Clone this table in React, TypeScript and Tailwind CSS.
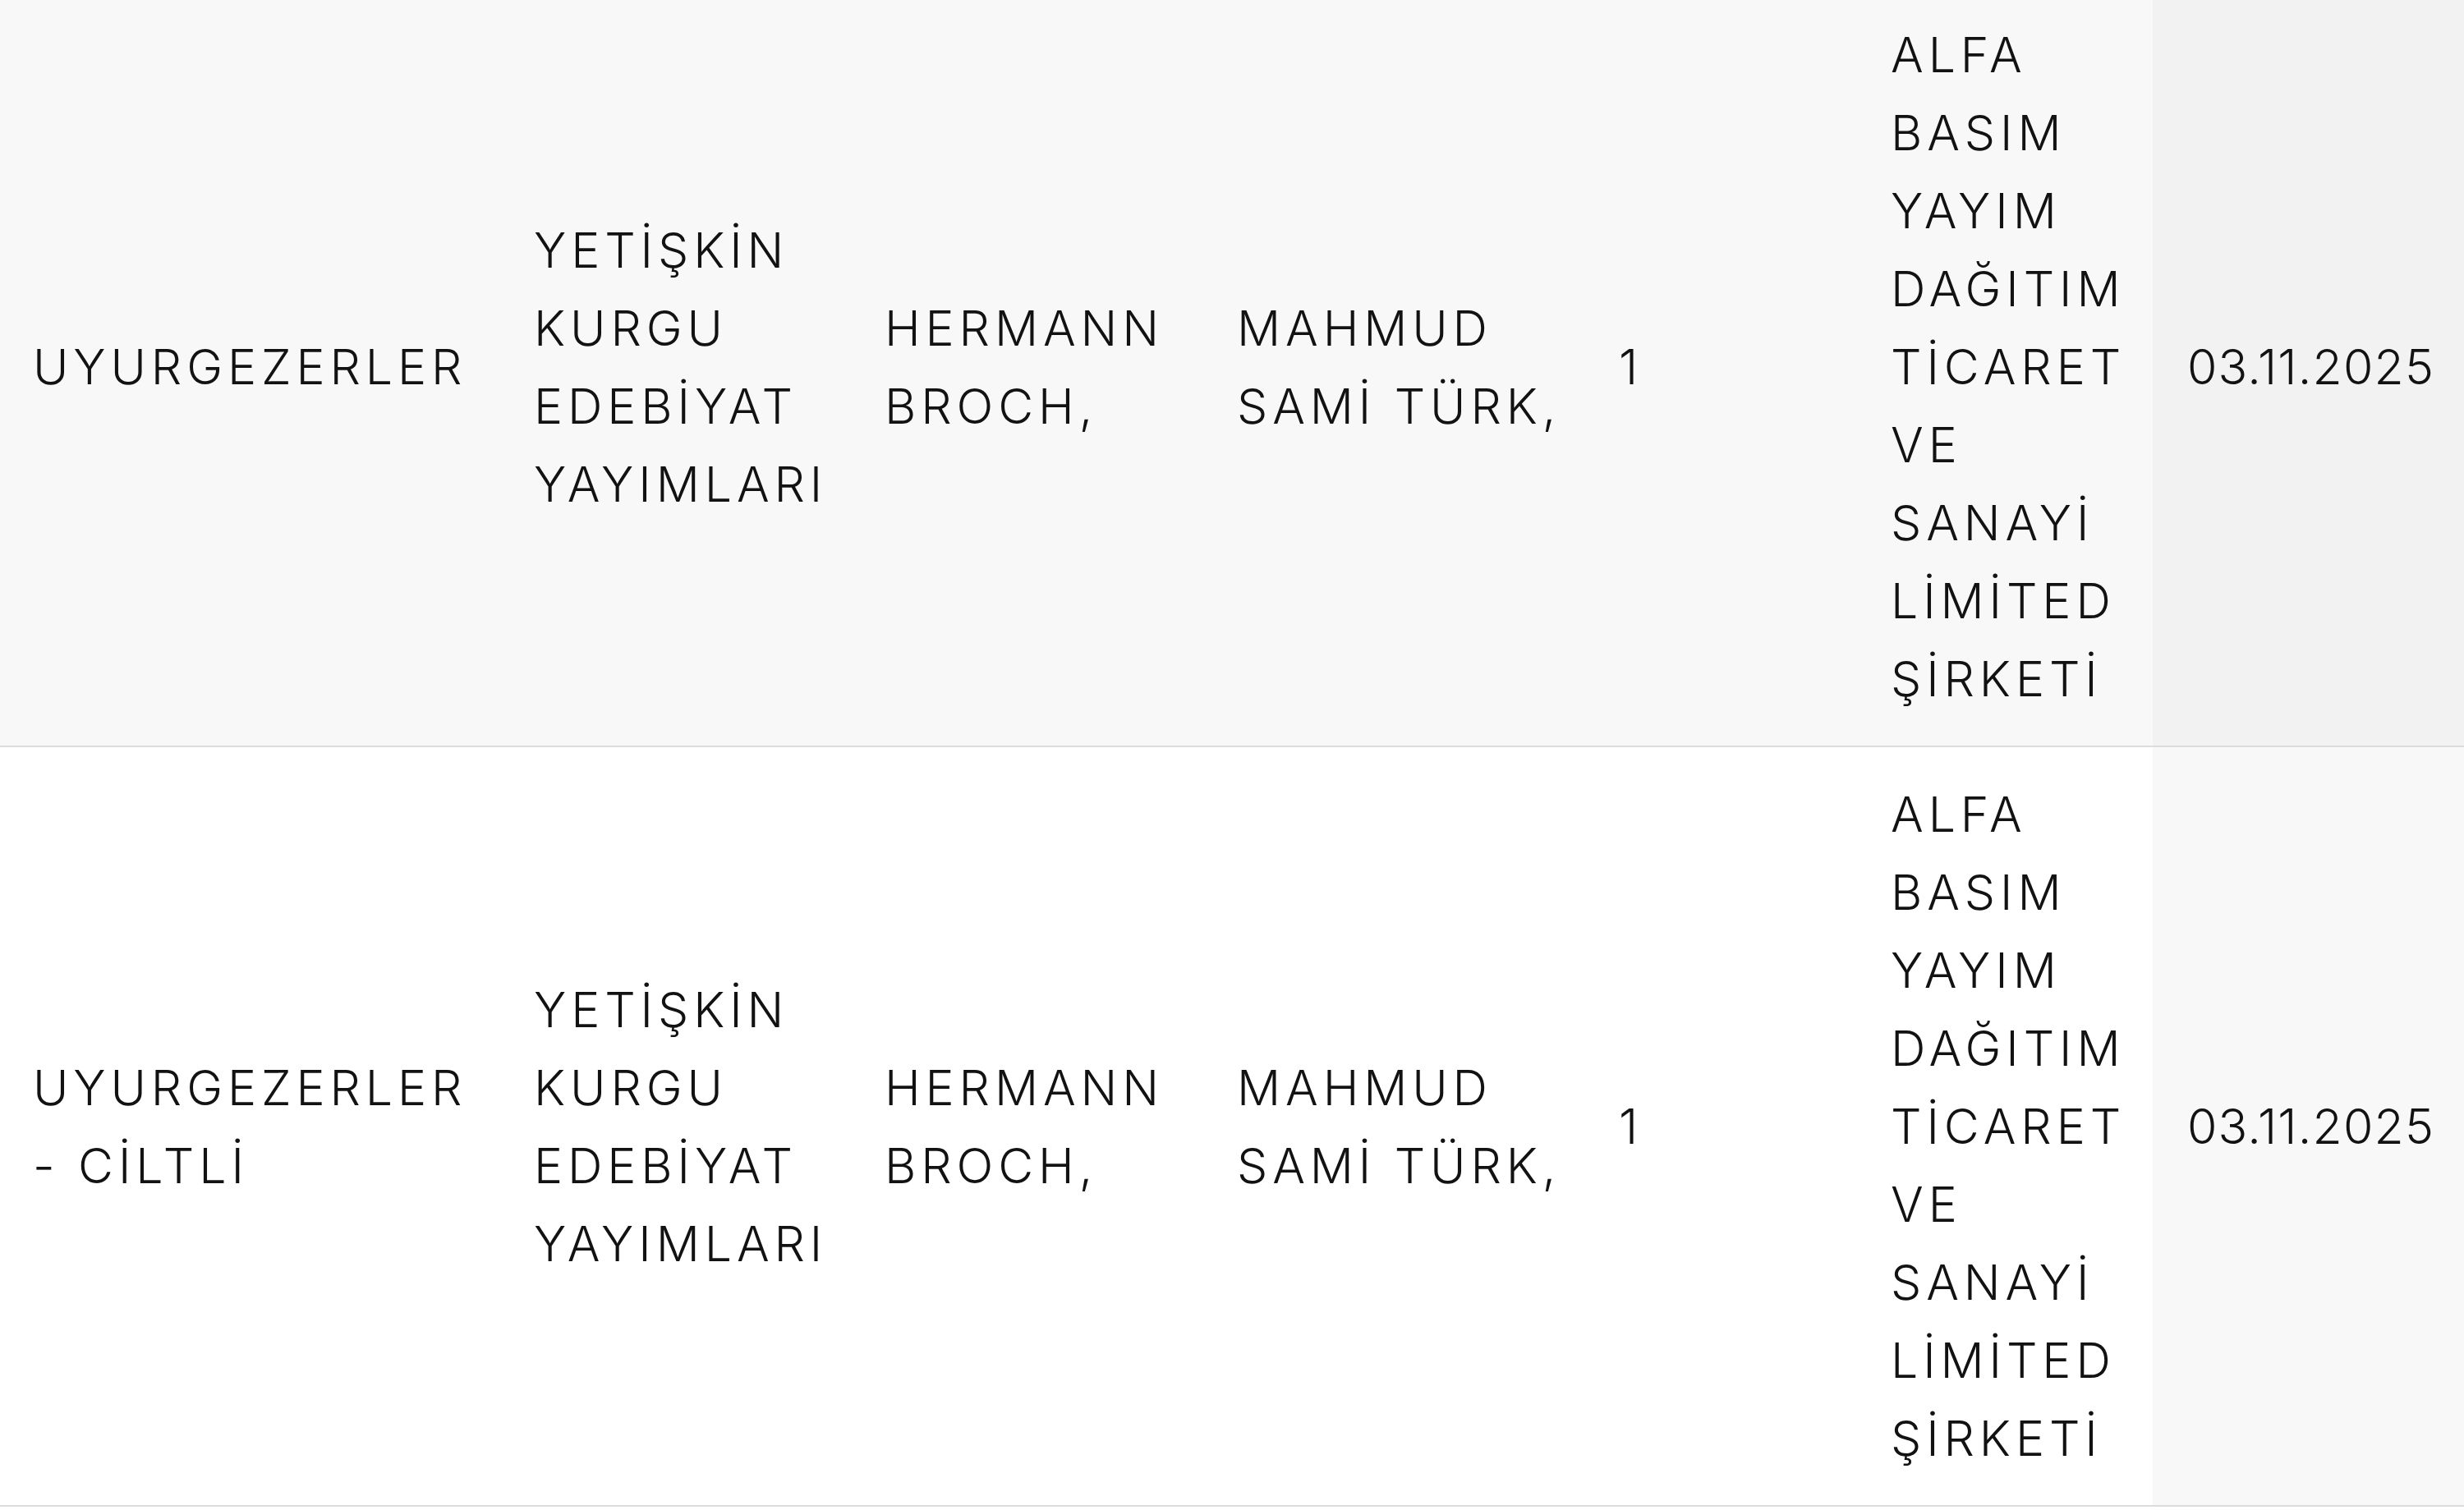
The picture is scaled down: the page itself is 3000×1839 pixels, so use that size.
import React from "react";

type Row = {
  bg: string;
  dateBg: string;
  cells: string[][];
};

const rows: Row[] = [
  {
    bg: "bg-[#f8f8f8]",
    dateBg: "bg-[#f2f2f2]",
    cells: [
      ["UYURGEZERLER"],
      ["YETİŞKİN", "KURGU", "EDEBİYAT", "YAYIMLARI"],
      ["HERMANN", "BROCH,"],
      ["MAHMUD", "SAMİ TÜRK,"],
      ["1"],
      ["ALFA", "BASIM", "YAYIM", "DAĞITIM", "TİCARET", "VE", "SANAYİ", "LİMİTED", "ŞİRKETİ"],
      ["03.11.2025"],
    ],
  },
  {
    bg: "bg-white",
    dateBg: "bg-[#f8f8f8]",
    cells: [
      ["UYURGEZERLER", "- CİLTLİ"],
      ["YETİŞKİN", "KURGU", "EDEBİYAT", "YAYIMLARI"],
      ["HERMANN", "BROCH,"],
      ["MAHMUD", "SAMİ TÜRK,"],
      ["1"],
      ["ALFA", "BASIM", "YAYIM", "DAĞITIM", "TİCARET", "VE", "SANAYİ", "LİMİTED", "ŞİRKETİ"],
      ["03.11.2025"],
    ],
  },
];

export default function App() {
  return (
    <div className="w-[3000px] h-[1839px] overflow-hidden bg-white">
      <table
        className="-mt-[15px] w-[3000px] table-fixed border-collapse text-[#121212] font-[350] text-[59px] leading-[95px] tracking-[0.1em]"
        style={{ fontFamily: "Inter, 'Noto Sans', sans-serif" }}
      >
        <colgroup>
          <col className="w-[610px]" />
          <col className="w-[427px]" />
          <col className="w-[429px]" />
          <col className="w-[465px]" />
          <col className="w-[331px]" />
          <col className="w-[359px]" />
          <col className="w-[379px]" />
        </colgroup>
        <tbody>
          {rows.map((row, ri) => (
            <tr key={ri} className={`${row.bg} border-b-2 border-[#dcdcdc]`}>
              {row.cells.map((lines, ci) => (
                <td
                  key={ci}
                  className={
                    ci === 6
                      ? `align-middle py-[34px] pl-[42px] pr-[10px] tracking-[0.02em] ${row.dateBg}`
                      : "align-middle py-[34px] pl-[40px] pr-[10px]"
                  }
                >
                  {lines.map((l, li) => (
                    <div key={li} className="whitespace-nowrap">
                      {l}
                    </div>
                  ))}
                </td>
              ))}
            </tr>
          ))}
        </tbody>
      </table>
    </div>
  );
}
